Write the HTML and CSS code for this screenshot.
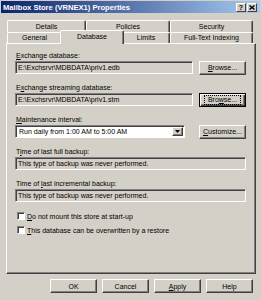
FILE: index.html
```html
<!DOCTYPE html>
<html lang="en">
<head>
    <meta charset="UTF-8">
    <title>Mailbox Store (VRNEX1) Properties</title>
    <link rel="stylesheet" href="styles.css">
</head>
<body>
    <div class="window">
        <!-- Title bar -->
        <div class="titlebar">
            <span class="title">Mailbox Store (VRNEX1) Properties</span>
            <div class="caption-buttons">
                <span class="cap-btn">?</span>
                <span class="cap-btn">
                    <svg width="6" height="5" viewBox="0 0 6 5">
                        <path d="M0.5 0.5 L5.5 4.5 M5.5 0.5 L0.5 4.5" stroke="#000" stroke-width="1.3"/>
                    </svg>
                </span>
            </div>
        </div>

        <!-- Tabs -->
        <div class="tabs">
            <div class="tab-row row-back">
                <div class="tab">Details</div>
                <div class="tab">Policies</div>
                <div class="tab">Security</div>
            </div>
            <div class="tab-row row-front">
                <div class="tab">General</div>
                <div class="tab active">Database</div>
                <div class="tab">Limits</div>
                <div class="tab">Full-Text Indexing</div>
            </div>
        </div>

        <!-- Database page -->
        <div class="panel">
            <div class="field">
                <div class="field-label"><u>E</u>xchange database:</div>
                <div class="field-row">
                    <div class="textbox tb-short">E:\Exchsrvr\MDBDATA\priv1.edb</div>
                    <div class="btn"><span><u>B</u>rowse...</span></div>
                </div>
            </div>

            <div class="field">
                <div class="field-label">E<u>x</u>change streaming database:</div>
                <div class="field-row">
                    <div class="textbox tb-short">E:\Exchsrvr\MDBDATA\priv1.stm</div>
                    <div class="btn btn-default"><span class="focus-ring">Bro<u>w</u>se...</span></div>
                </div>
            </div>

            <div class="field">
                <div class="field-label"><u>M</u>aintenance interval:</div>
                <div class="field-row">
                    <div class="combo">
                        <span class="combo-text">Run daily from 1:00 AM to 5:00 AM</span>
                        <span class="combo-arrow">
                            <svg width="5" height="3" viewBox="0 0 5 3"><path d="M0 0 H5 L2.5 3 Z" fill="#000"/></svg>
                        </span>
                    </div>
                    <div class="btn"><span><u>C</u>ustomize...</span></div>
                </div>
            </div>

            <div class="field">
                <div class="field-label">T<u>i</u>me of last full backup:</div>
                <div class="field-row">
                    <div class="textbox">This type of backup was never performed.</div>
                </div>
            </div>

            <div class="field">
                <div class="field-label">Time of <u>l</u>ast incremental backup:</div>
                <div class="field-row">
                    <div class="textbox">This type of backup was never performed.</div>
                </div>
            </div>

            <div class="check-row first">
                <span class="check"></span>
                <span><u>D</u>o not mount this store at start-up</span>
            </div>
            <div class="check-row">
                <span class="check"></span>
                <span><u>T</u>his database can be overwritten by a restore</span>
            </div>
        </div>

        <!-- Dialog buttons -->
        <div class="dialog-buttons">
            <div class="btn">OK</div>
            <div class="btn">Cancel</div>
            <div class="btn"><span><u>A</u>pply</span></div>
            <div class="btn">Help</div>
        </div>
    </div>
</body>
</html>
```

FILE: styles.css
```css
:root {
    --face: #d4d0c8;
    --shadow: #808080;
    --dark: #404040;
    --light: #ffffff;
}

body {
    margin: 0;
    background: var(--face);
    font-family: 'Liberation Sans', Arial, sans-serif;
    font-size: 7px;
    color: #000;
}

.window {
    width: 261px;
    height: 300px;
    box-sizing: border-box;
    padding: 1px;
    background: var(--face);
}

/* Title bar */
.titlebar {
    height: 12px;
    display: flex;
    align-items: center;
    justify-content: space-between;
    padding: 0 3px 0 2px;
    background: linear-gradient(to right, #0a246a, #a6caf0);
}

.title {
    color: #fff;
    font-weight: bold;
    font-size: 7.6px;
    white-space: nowrap;
}

.caption-buttons {
    display: flex;
    gap: 1px;
}

.cap-btn {
    width: 10px;
    height: 9px;
    box-sizing: border-box;
    display: flex;
    align-items: center;
    justify-content: center;
    background: var(--face);
    border: 1px solid;
    border-color: var(--light) var(--dark) var(--dark) var(--light);
    font-weight: bold;
    font-size: 7px;
    line-height: 7px;
}

/* Tabs */
.tabs {
    margin: 7px 0 0 6px;
}

.tab-row {
    display: grid;
}

.row-back {
    grid-template-columns: 79px 84px 83px;
    height: 12px;
}

.row-front {
    grid-template-columns: 55px 60px 48px 83px;
    height: 11px;
}

.tab {
    box-sizing: border-box;
    border: 1px solid;
    border-bottom: none;
    border-color: var(--light) var(--dark) transparent var(--light);
    border-radius: 2px 2px 0 0;
    box-shadow: inset -1px 0 var(--shadow);
    text-align: center;
    white-space: nowrap;
}

.row-back .tab {
    line-height: 11px;
}

.row-front .tab {
    line-height: 10px;
}

.tab.active {
    margin: -2px -2px -1px;
    line-height: 11px;
    background: var(--face);
    position: relative;
    z-index: 1;
}

/* Page panel */
.panel {
    margin-left: 5px;
    width: 250px;
    height: 231px;
    box-sizing: border-box;
    padding: 7px 9px 0 8px;
    border: 1px solid;
    border-color: var(--light) var(--dark) var(--dark) var(--light);
    box-shadow: inset -1px -1px var(--shadow);
}

.field {
    margin-bottom: 9px;
}

.field-label {
    height: 9px;
    line-height: 9px;
    margin: 0 0 1px 1px;
    white-space: nowrap;
}

.field-row {
    display: flex;
    align-items: center;
    justify-content: space-between;
    height: 13px;
}

.textbox {
    flex: 1;
    height: 13px;
    box-sizing: border-box;
    padding-left: 2px;
    line-height: 11px;
    white-space: nowrap;
    overflow: hidden;
    border: 1px solid;
    border-color: var(--shadow) var(--light) var(--light) var(--shadow);
    box-shadow: inset 1px 1px var(--dark);
}

.tb-short {
    flex: none;
    width: 178px;
}

.combo {
    width: 170px;
    height: 13px;
    box-sizing: border-box;
    display: flex;
    align-items: center;
    justify-content: space-between;
    padding: 0 1px 0 3px;
    background: #fff;
    border: 1px solid;
    border-color: var(--shadow) var(--light) var(--light) var(--shadow);
    box-shadow: inset 1px 1px var(--dark);
}

.combo-arrow {
    width: 11px;
    height: 9px;
    box-sizing: border-box;
    display: flex;
    align-items: center;
    justify-content: center;
    background: var(--face);
    border: 1px solid;
    border-color: var(--light) var(--dark) var(--dark) var(--light);
    box-shadow: inset -1px -1px var(--shadow);
}

/* Push buttons */
.btn {
    width: 47px;
    height: 14px;
    box-sizing: border-box;
    display: flex;
    align-items: center;
    justify-content: center;
    flex: none;
    background: var(--face);
    border: 1px solid;
    border-color: var(--light) var(--dark) var(--dark) var(--light);
    box-shadow: inset -1px -1px var(--shadow);
    white-space: nowrap;
}

.btn-default {
    border-color: #000;
    box-shadow: inset 1px 1px var(--light), inset -1px -1px var(--dark), inset -2px -2px var(--shadow);
}

.focus-ring {
    border: 1px dotted #000;
    padding: 0 3px;
    line-height: 8px;
}

/* Check boxes */
.check-row {
    display: flex;
    align-items: center;
    height: 10px;
    margin: 4px 0 0 2px;
    white-space: nowrap;
}

.check-row.first {
    margin-top: 9px;
}

.check {
    width: 8px;
    height: 8px;
    box-sizing: border-box;
    margin-right: 2px;
    background: #fff;
    border: 1px solid;
    border-color: var(--shadow) var(--light) var(--light) var(--shadow);
    box-shadow: inset 1px 1px var(--dark);
}

.dialog-buttons {
    display: flex;
    justify-content: flex-end;
    gap: 5px;
    margin-top: 5px;
    padding-right: 7px;
}
```
